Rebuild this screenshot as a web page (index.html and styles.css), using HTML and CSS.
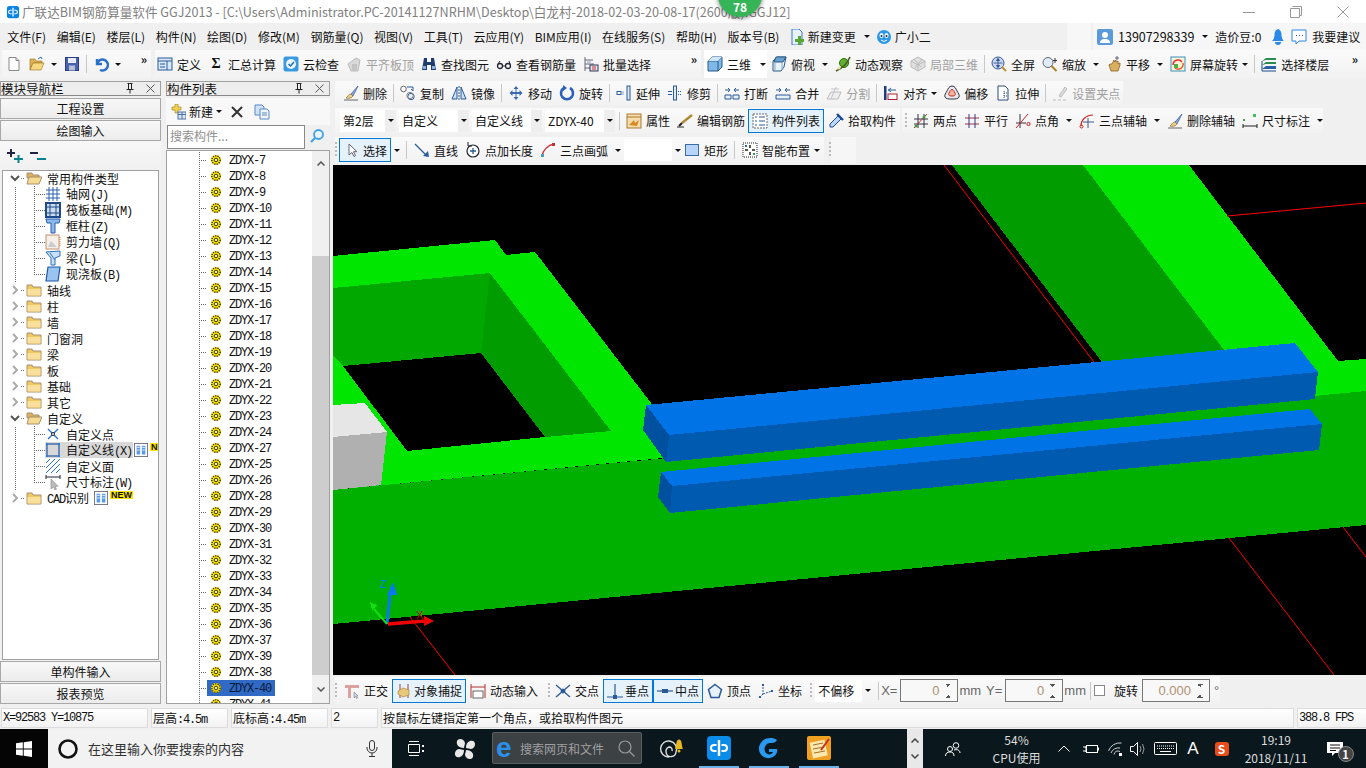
FILE: index.html
```html
<!DOCTYPE html>
<html lang="zh-CN">
<head>
    <meta charset="UTF-8">
    <title>广联达BIM钢筋算量软件 GGJ2013</title>
    <link rel="stylesheet" href="styles.css">
</head>

<body>
<svg class="defs" width="0" height="0">
    <symbol id="logo" viewBox="0 0 16 16"><rect x="1" y="1" width="14" height="14" rx="3" fill="#0a84e0"/><path d="M8 3v10" stroke="#fff" stroke-width="1.500"/><path d="M6.500 6H5a2 2 0 0 0 0 4h1.500M9.500 6H11a2 2 0 0 1 0 4H9.500" fill="none" stroke="#fff" stroke-width="1.300"/></symbol>
    <symbol id="new" viewBox="0 0 16 16"><path d="M3 1.500h7l3 3v10H3z" fill="#fff" stroke="#888"/><path d="M10 1.500v3h3" fill="#ddd" stroke="#888"/></symbol>
    <symbol id="open" viewBox="0 0 16 16"><path d="M1 3h5l1 2h6v2H4l-3 7z" fill="#e0b050" stroke="#9a7020" stroke-width=".6"/><path d="M4 7h11l-3 7H1z" fill="#f6d880" stroke="#9a7020" stroke-width=".6"/><path d="M9 3l3-2 1 2" fill="none" stroke="#3070c0"/></symbol>
    <symbol id="save" viewBox="0 0 16 16"><rect x="1.500" y="1.500" width="13" height="13" fill="#4a62b0" stroke="#283c80"/><rect x="4" y="2" width="8" height="5" fill="#e8ecf8"/><rect x="5" y="9.500" width="6" height="5" fill="#b8c0d8"/></symbol>
    <symbol id="undo" viewBox="0 0 16 16"><path d="M4 3v5h5M4 8a5.500 5.500 0 1 1 3 6" fill="none" stroke="#2a70c8" stroke-width="2.400"/></symbol>
    <symbol id="define" viewBox="0 0 16 16"><rect x="1" y="2" width="14" height="12" fill="#d8e8f8" stroke="#2a5a98"/><path d="M1 5h14M3 8h5M3 11h5M10 5v9" stroke="#2a5a98" fill="none"/></symbol>
    <symbol id="cloud" viewBox="0 0 16 16"><rect x=".5" y=".5" width="15" height="15" rx="2" fill="#3a9ae0"/><circle cx="8" cy="8" r="5" fill="#e8f4ff"/><path d="M5.500 8l2 2 3.500-4" fill="none" stroke="#2070b8" stroke-width="1.500"/></symbol>
    <symbol id="flat" viewBox="0 0 16 16"><path d="M2 8l8-6 4 2-2 11H5z" fill="#d8d8d8" stroke="#bbb"/><path d="M6 8h5v7H6z" fill="#c4c4c4"/></symbol>
    <symbol id="binoc" viewBox="0 0 16 16"><path d="M3 2h3v4h4V2h3l2 12H10V9H6v5H1z" fill="#1f3c70"/><rect x="2" y="10" width="3" height="3" fill="#8ab0e0"/><rect x="11" y="10" width="3" height="3" fill="#8ab0e0"/></symbol>
    <symbol id="glasses" viewBox="0 0 16 16"><circle cx="4" cy="10" r="2.500" fill="none" stroke="#223" stroke-width="1.300"/><circle cx="12" cy="10" r="2.500" fill="none" stroke="#223" stroke-width="1.300"/><path d="M6.500 10h3M2 8l2-3M14 8l-1-3" stroke="#223" fill="none"/></symbol>
    <symbol id="batch" viewBox="0 0 16 16"><path d="M2 1v14M2 4h8M2 8h9M2 12h5" stroke="#667" fill="none"/><rect x="4" y="5" width="4" height="2" fill="#bcd"/><rect x="7" y="9" width="8" height="6" fill="#dde8f4" stroke="#335"/><path d="M9 11h4M9 13h4" stroke="#c33"/></symbol>
    <symbol id="cube" viewBox="0 0 16 16"><path d="M1 5l4-4h10v10l-4 4H1z" fill="#7db8e8" stroke="#2a5a88"/><path d="M1 5h10v10M11 5l4-4" fill="none" stroke="#2a5a88"/><path d="M1 5l4-4h10l-4 4z" fill="#cfe6f8"/></symbol>
    <symbol id="top" viewBox="0 0 16 16"><path d="M2 5l4-4h9l-2 10-3 4H2z" fill="#e8f2fa" stroke="#2a5a88"/><path d="M5 1h10l-3 5H3z" fill="#6aa0d0" stroke="#2a5a88"/><path d="M4 7v7M11 6v8" stroke="#8ab" fill="none"/></symbol>
    <symbol id="orbit" viewBox="0 0 16 16"><circle cx="9" cy="7" r="4.500" fill="#60b030" stroke="#2a7010"/><path d="M1 15C6 13 12 8 15 1" fill="none" stroke="#4a5a20" stroke-width="1.600"/><circle cx="4" cy="12" r="1.500" fill="#e8e0a0"/></symbol>
    <symbol id="local" viewBox="0 0 16 16"><path d="M8 1l7 4v6l-7 4-7-4V5z" fill="#e0e0e0" stroke="#bbb"/><path d="M1 5l7 4 7-4M8 9v6M4 3l7 8M12 3L5 12" fill="none" stroke="#bbb"/></symbol>
    <symbol id="full" viewBox="0 0 16 16"><circle cx="7" cy="7" r="6" fill="#c8d8f0" stroke="#3a5a98"/><path d="M7 2.500v9M2.500 7h9M7 2.500l-1.500 2h3zM7 11.500l-1.500-2h3z" stroke="#2a4a88" fill="#2a4a88" stroke-width=".8"/><path d="M11 11l4 4" stroke="#c09030" stroke-width="2"/></symbol>
    <symbol id="zoom" viewBox="0 0 16 16"><circle cx="6" cy="6.500" r="5" fill="#e0ecf8" stroke="#667"/><path d="M9.500 10l5 5" stroke="#b08020" stroke-width="2"/><path d="M13 2v5M11 4.500h4" stroke="#333"/></symbol>
    <symbol id="pan" viewBox="0 0 16 16"><path d="M3 9l2 6h7l2-6V7l-2 1V5l-2 1V4L8 6V4L6 8 4 8z" fill="#d8b060" stroke="#8a6020" stroke-width=".8"/><path d="M11 0v4M9 2h4" stroke="#667" fill="none"/></symbol>
    <symbol id="spin" viewBox="0 0 16 16"><rect x="1" y="1" width="14" height="14" fill="#f8f4d8" stroke="#3a90c0"/><path d="M3 9a5 5 0 0 1 9-3" fill="none" stroke="#e03030" stroke-width="1.500"/><path d="M13 7a5 5 0 0 1-8 5" fill="none" stroke="#e06030" stroke-width="1.500"/><rect x="4" y="8" width="4" height="4" fill="#50b040"/></symbol>
    <symbol id="floors" viewBox="0 0 16 16"><path d="M1 5l4-3h10v2H5zM1 9l4-3h10v2H5z" fill="#2a8a50"/><path d="M1 13l4-3h10v3z" fill="#2a60a8"/><path d="M1 5v10h14" fill="none" stroke="#1a4a88"/></symbol>
    <symbol id="erase" viewBox="0 0 16 16"><path d="M15 1L8 9l2 2z" fill="#88a8d8" stroke="#3a5a98" stroke-width=".7"/><path d="M8 9c-3 0-3 3-5 4 2 1 6 0 7-2z" fill="#e8d088" stroke="#8a7030" stroke-width=".7"/><path d="M1 15h14" stroke="#666"/></symbol>
    <symbol id="copy" viewBox="0 0 16 16"><circle cx="3.500" cy="4" r="2.800" fill="#fff" stroke="#666"/><circle cx="11" cy="11.500" r="3.200" fill="#e8ecf4" stroke="#2a5a98"/><circle cx="10" cy="10.500" r="3.200" fill="none" stroke="#888"/><path d="M7 2h6v4M13 6l-2-2" fill="none" stroke="#2a5a98"/></symbol>
    <symbol id="mirror" viewBox="0 0 16 16"><path d="M6 2L1 14h5zM10 2l5 12h-5z" fill="#d0e0f4" stroke="#2a5a98"/><path d="M8 1v14" stroke="#2a5a98" stroke-dasharray="2 1"/></symbol>
    <symbol id="move" viewBox="0 0 16 16"><path d="M8 1l2.500 3h-2v3h3V5l3 3-3 3V9h-3v3h2L8 15l-2.500-3h2V9h-3v2l-3-3 3-3v2h3V4h-2z" fill="#3a6ab0"/></symbol>
    <symbol id="rotate" viewBox="0 0 16 16"><path d="M5 3a6 6 0 1 0 6 0" fill="none" stroke="#2a60c0" stroke-width="2.600"/><path d="M4 0v6l4-3z" fill="#2a60c0"/></symbol>
    <symbol id="extend" viewBox="0 0 16 16"><rect x="1" y="6.500" width="4" height="3" fill="#fff" stroke="#2a5a98"/><path d="M6.500 7h2M6.500 9h2" stroke="#2a5a98" stroke-dasharray="1 1"/><rect x="11" y="1" width="3" height="14" fill="#dce8f8" stroke="#2a5a98"/></symbol>
    <symbol id="trim" viewBox="0 0 16 16"><path d="M1 6.500h4M1 9.500h4" stroke="#2a5a98"/><path d="M11 6.500h3M11 9.500h3" stroke="#2a5a98" stroke-dasharray="1 1"/><rect x="6.500" y="1" width="3" height="14" fill="#dce8f8" stroke="#2a5a98"/></symbol>
    <symbol id="break" viewBox="0 0 16 16"><path d="M1 10h6v4H1zM9 10h6v4H9z" fill="#e8f0fa" stroke="#2a5a98"/><path d="M1 5h5M4 3l2 2-2 2M15 5h-5M12 3l-2 2 2 2" fill="none" stroke="#2a5a98"/></symbol>
    <symbol id="merge" viewBox="0 0 16 16"><path d="M1 10h14v4H1z" fill="#e8f0fa" stroke="#2a5a98"/><path d="M1 5h5M4 3l2 2-2 2M15 5h-5M12 3l-2 2 2 2" fill="none" stroke="#2a5a98"/></symbol>
    <symbol id="split" viewBox="0 0 16 16"><path d="M1 14l4-7h10l-3 7z" fill="#eee" stroke="#bbb"/><path d="M10 2l-5 12M5 4h8" stroke="#c4c4c4" fill="none"/></symbol>
    <symbol id="align" viewBox="0 0 16 16"><rect x="1" y="1" width="2.500" height="14" fill="#1f3c80"/><rect x="5" y="9" width="9" height="5.500" fill="#fff" stroke="#b02030"/><path d="M13 5H5M8 3L5.500 5 8 7" stroke="#2a5a98" fill="none"/></symbol>
    <symbol id="offset" viewBox="0 0 16 16"><path d="M8 1c3 0 4 3 5 5s3 4 2 6-3 2-7 2-6 0-7-2 1-4 2-6 2-5 5-5z" fill="#e8e8f0" stroke="#334"/><path d="M8 4.500c1.500 0 2 1.500 3 3.500s0 3-3 3-4-1-3-3 1.500-3.500 3-3.500z" fill="#f4b0a0" stroke="#c03020"/></symbol>
    <symbol id="stretch" viewBox="0 0 16 16"><path d="M3 1h7l3 3v11H3z" fill="#fff" stroke="#2a4a78"/><path d="M9 6v8M9 8h3M9 11h3" stroke="#2a4a78" stroke-dasharray="1 1"/></symbol>
    <symbol id="grip" viewBox="0 0 16 16"><path d="M7 11l6-9 2 2-6 8z" fill="#ddd" stroke="#bbb"/><path d="M1 15h3M6 15h3M11 15h3" stroke="#bbb"/></symbol>
    <symbol id="prop" viewBox="0 0 16 16"><rect x="1" y="1" width="14" height="14" fill="#f4dcae" stroke="#aa7a30"/><path d="M1 4h14" stroke="#aa7a30"/><path d="M3 12l5-5 1 3 4-3-2 6z" fill="#d88a20"/></symbol>
    <symbol id="rebar" viewBox="0 0 16 16"><path d="M15 2L5 10" stroke="#b08a30" stroke-width="2.400"/><path d="M5 10l-3 3" stroke="#222" stroke-width="2"/><path d="M0 14h7" stroke="#222"/></symbol>
    <symbol id="list" viewBox="0 0 16 16"><rect x="1" y="1" width="14" height="14" fill="#fff" stroke="#667" stroke-dasharray="2 1"/><path d="M3 4h2M3 8h2M3 12h2M7 4h6M7 8h6M7 12h6" stroke="#2a5a98"/></symbol>
    <symbol id="picker" viewBox="0 0 16 16"><path d="M10 3l3 3-8 8H2v-3z" fill="#bcd8f8" stroke="#1f4a98"/><path d="M9 1l6 6" stroke="#1f4a98" stroke-width="2.400"/></symbol>
    <symbol id="two" viewBox="0 0 16 16"><path d="M5 1v14M11 1v14M1 6h14M1 11h14" stroke="#334" fill="none"/><path d="M1 15L14 1" stroke="#b03030"/><circle cx="3" cy="13" r="1.500" fill="#40a040"/><circle cx="11" cy="4" r="1.500" fill="#40a040"/></symbol>
    <symbol id="parallel" viewBox="0 0 16 16"><path d="M1 5h14M1 11h14" stroke="#a03040"/><path d="M5 1v14M11 1v14" stroke="#303880"/></symbol>
    <symbol id="angle" viewBox="0 0 16 16"><path d="M5 1v14M1 10h10" stroke="#334" fill="none"/><path d="M1 15L13 1" stroke="#c02020"/><circle cx="13.500" cy="11" r="1.600" fill="none" stroke="#c02020"/></symbol>
    <symbol id="arc3" viewBox="0 0 16 16"><path d="M2 13C2 7 7 2 14 2" fill="none" stroke="#d02020" stroke-width="1.200"/><circle cx="2.500" cy="13.500" r="1.500" fill="none" stroke="#d02020"/><path d="M9 5v10M4 9h11" stroke="#2a4a88" stroke-width=".9"/></symbol>
    <symbol id="dim" viewBox="0 0 16 16"><path d="M1 11v4M15 11v4M1 13h14" stroke="#222"/><rect x="1" y="6" width="2" height="2" fill="#40a040"/><rect x="11" y="1" width="3" height="3" fill="#40c060"/></symbol>
    <symbol id="cursor" viewBox="0 0 16 16"><path d="M5 2v11l3-2.500 2 4 1.500-.8-2-4h3.500z" fill="#fff" stroke="#667"/></symbol>
    <symbol id="line" viewBox="0 0 16 16"><path d="M1 2l12 12" stroke="#2a5a98" stroke-width="1.300"/><path d="M15 15l-6-1 5-5z" fill="#2a5a98"/></symbol>
    <symbol id="ptlen" viewBox="0 0 16 16"><circle cx="8" cy="9" r="6" fill="#fff" stroke="#223" stroke-width="1.200"/><path d="M8 6v6M5 9h6" stroke="#2a5a98" stroke-width="1.300"/><path d="M3 0v4h4" fill="none" stroke="#223"/></symbol>
    <symbol id="arc" viewBox="0 0 16 16"><path d="M2 14C3 8 8 3 14 2" fill="none" stroke="#c83030" stroke-width="1.400"/><rect x="1" y="12" width="3" height="3" fill="#40a0c0"/><rect x="12" y="1" width="3" height="3" fill="#c83030"/></symbol>
    <symbol id="rect" viewBox="0 0 16 16"><rect x="1.500" y="2.500" width="13" height="11" fill="#b8d4f8" stroke="#3a6ab0"/></symbol>
    <symbol id="smart" viewBox="0 0 16 16"><rect x="1" y="1" width="14" height="14" fill="#fff" stroke="#222" stroke-dasharray="1 1"/><path d="M8 3v3M8 10v3M3 8h3M10 8h3" stroke="#222" stroke-width="1.500"/><rect x="3" y="3" width="2" height="2" fill="#3060c0"/><rect x="11" y="11" width="2" height="2" fill="#30a060"/></symbol>
    <symbol id="ortho" viewBox="0 0 16 16"><path d="M1 2h14v3H1zM4 5h3v10H4z" fill="#dca0a0"/><path d="M10 9v6l1.500-1.500 1 2 1-.5-1-2H14z" fill="#ccd8e8" stroke="#667" stroke-width=".5"/></symbol>
    <symbol id="snap" viewBox="0 0 16 16"><path d="M4 1v14M12 1v14" stroke="#a04030"/><path d="M2 8l5-3 6 2v5l-6 2-5-3z" fill="#e8c878" stroke="#a08030" stroke-width=".6"/></symbol>
    <symbol id="dyn" viewBox="0 0 16 16"><path d="M1 1v14M15 1v14" stroke="#b03030"/><path d="M1 4h14" stroke="#b03030"/><rect x="3" y="8" width="10" height="7" fill="#fff" stroke="#666"/></symbol>
    <symbol id="cross" viewBox="0 0 16 16"><path d="M1 2l14 12M15 2L1 14" stroke="#2a5a98" stroke-width="1.300"/><rect x="6" y="6" width="4" height="4" fill="#2a5a98" transform="rotate(45 8 8)"/></symbol>
    <symbol id="perp" viewBox="0 0 16 16"><path d="M8 1v13M0 14h16" stroke="#2a5a98" stroke-width="1.200"/><rect x="6" y="12" width="4" height="4" fill="#2a5a98"/></symbol>
    <symbol id="mid" viewBox="0 0 16 16"><path d="M0 8h16" stroke="#2a5a98" stroke-width="1.200"/><rect x="5" y="6" width="6" height="4" fill="#2a5a98"/></symbol>
    <symbol id="vertex" viewBox="0 0 16 16"><path d="M8 1.500l6.500 5-2.500 8H4l-2.500-8z" fill="#e8f2fc" stroke="#2a5a98" stroke-width="1.500"/></symbol>
    <symbol id="coord" viewBox="0 0 16 16"><path d="M5 1v10M5 11l9-3M5 11l-4 4" stroke="#2a5a98" stroke-dasharray="2 1"/><rect x="4" y="1" width="2" height="2" fill="#2a5a98"/><rect x="13" y="7" width="2" height="2" fill="#2a5a98"/><rect x="1" y="13" width="2" height="2" fill="#2a5a98"/></symbol>
    <symbol id="chev-r" viewBox="0 0 12 12"><path d="M4 2l4 4-4 4" fill="none" stroke="#aaa" stroke-width="2"/></symbol>
    <symbol id="chev-d" viewBox="0 0 12 12"><path d="M2 4l4 4 4-4" fill="none" stroke="#555" stroke-width="2"/></symbol>
    <symbol id="folder" viewBox="0 0 16 16"><path d="M1 3h5l1 2h8v9H1z" fill="#f0c860" stroke="#a89070"/><path d="M1.500 7h13v6.500h-13z" fill="#f8e09a"/></symbol>
    <symbol id="folder-o" viewBox="0 0 16 16"><path d="M1 3h5l1 2h6v3H1z" fill="#d8b060" stroke="#a89070"/><path d="M3 7h13l-3 7H1z" fill="#f6dc90" stroke="#a89070"/></symbol>
    <symbol id="t-grid" viewBox="0 0 16 16"><path d="M4 1v14M8 1v14M12 1v14M1 4h14M1 8h14M1 12h14" stroke="#2a60b0"/></symbol>
    <symbol id="t-raft" viewBox="0 0 16 16"><rect x="1" y="1" width="14" height="14" fill="#cde" stroke="#1f4a88" stroke-width="2"/><path d="M5 1v14M11 1v14M1 5h14M1 11h14" stroke="#1f4a88"/></symbol>
    <symbol id="t-col" viewBox="0 0 16 16"><path d="M1 1h14l-1 4h-4v10H6V5H2z" fill="#8ab8e8" stroke="#2a60b0"/></symbol>
    <symbol id="t-wall" viewBox="0 0 16 16"><rect x="1" y="1" width="13" height="14" fill="#f4efe8" stroke="#c89070"/><path d="M3 13l3-6 2 2 4 4z" fill="#ccc"/><path d="M15 3v10" stroke="#d08030" stroke-dasharray="1 1"/></symbol>
    <symbol id="t-beam" viewBox="0 0 16 16"><path d="M1 2l14-1v5l-5 2v7H6V8z" fill="#c8e0f8" stroke="#2a70b8"/><path d="M5 3l5 7" stroke="#2a70b8"/></symbol>
    <symbol id="t-slab" viewBox="0 0 16 16"><path d="M3 1h12l-2 14H1z" fill="#9ac4f0" stroke="#1f58a8" stroke-width="1.200"/></symbol>
    <symbol id="t-cpt" viewBox="0 0 16 16"><path d="M3 3l10 10M13 3L3 13" stroke="#2a70c8" stroke-width="1.400"/><circle cx="8" cy="8" r="1.500" fill="#fff" stroke="#223"/></symbol>
    <symbol id="t-cline" viewBox="0 0 16 16"><rect x="2" y="2" width="12" height="12" fill="none" stroke="#1f58a8" stroke-width="1.200"/><path d="M1 1h2v2H1zM13 1h2v2h-2zM1 13h2v2H1zM13 13h2v2h-2z" fill="#2a80e0"/></symbol>
    <symbol id="t-cface" viewBox="0 0 16 16"><path d="M1 5l4-4M1 10l9-9M1 15L15 1M6 15l9-9M11 15l4-4" stroke="#2a70c8"/></symbol>
    <symbol id="t-cdim" viewBox="0 0 16 16"><path d="M1 1v4M15 1v4M1 3h14" stroke="#223"/><path d="M6 5v10l2.500-2 1.500 3 1.500-.7-1.500-3H13z" fill="#bbb" stroke="#888" stroke-width=".6"/></symbol>
    <symbol id="book" viewBox="0 0 16 16"><rect x=".5" y=".5" width="15" height="15" fill="#fff" stroke="#667"/><path d="M3 3h4v10H3zM9 3h4v10H9z" fill="#5a98e8"/><path d="M3.500 5h3M3.500 8h3M9.500 5h3M9.500 8h3" stroke="#fff"/></symbol>
    <symbol id="gear" viewBox="0 0 12 12"><circle cx="6" cy="6" r="5" fill="#ffe800"/><circle cx="6" cy="6" r="4.200" fill="none" stroke="#222" stroke-width="1.300" stroke-dasharray="1.300 1"/><circle cx="6" cy="6" r="1.800" fill="#fff27a" stroke="#222" stroke-width=".9"/></symbol>
    <symbol id="search" viewBox="0 0 16 16"><circle cx="9.500" cy="6.500" r="4.500" fill="#e8f4ff" stroke="#40a0e8" stroke-width="1.800"/><path d="M6 10l-4 4" stroke="#40a0e8" stroke-width="2.200"/></symbol>
    <symbol id="plus" viewBox="0 0 18 16"><path d="M1 5h8M5 1v8" stroke="#224" stroke-width="2"/><path d="M8 11h9M12.500 7v8" stroke="#0a8090" stroke-width="2"/></symbol>
    <symbol id="minus" viewBox="0 0 18 16"><path d="M1 5h8" stroke="#224" stroke-width="2"/><path d="M8 11h9" stroke="#0a8090" stroke-width="2"/></symbol>
    <symbol id="add-new" viewBox="0 0 16 16"><path d="M5 0h3v3h3v3H8v3H5V6H2V3h3z" fill="#f0d050" stroke="#a08020" stroke-width=".6"/><rect x="8" y="8" width="8" height="7" fill="#dde8f8" stroke="#4a70a8"/><path d="M8 10.500h8M12 8v7" stroke="#4a70a8"/></symbol>
    <symbol id="doc-copy" viewBox="0 0 16 16"><path d="M1 1h7l2 2v8H1z" fill="#cfe2f8" stroke="#5a88c0"/><path d="M6 5h7l2 2v8H6z" fill="#eef5fd" stroke="#5a88c0"/><path d="M8 9h5M8 11h5" stroke="#5a88c0"/></symbol>
    <symbol id="user" viewBox="0 0 16 16"><rect width="16" height="16" rx="2" fill="#5a9ad8"/><circle cx="8" cy="6" r="3" fill="#fff"/><path d="M3 14c0-3 2-4 5-4s5 1 5 4z" fill="#fff"/></symbol>
    <symbol id="bell" viewBox="0 0 16 16"><path d="M8 0c3 1 3.500 4 3.500 6s1 5 2.500 6H2c1.500-1 2.500-4 2.500-6S5 1 8 0z" fill="#2a88e8"/><path d="M5 13h6a3 3 0 0 1-6 0z" fill="#2a88e8"/></symbol>
    <symbol id="advice" viewBox="0 0 16 16"><path d="M1 1h14v11H8l-3 3v-3H1z" fill="#fff" stroke="#2a88e8"/><path d="M5 6.500h1M8 6.500h1M11 6.500h1" stroke="#2a5a98"/></symbol>
    <symbol id="change" viewBox="0 0 16 16"><path d="M3 0h7l3 3v13H3z" fill="#e8f2fc" stroke="#3a78c0"/><path d="M9 7v3H6v3h3v3h3v-3h3v-3h-3V7z" fill="#58a830"/></symbol>
    <symbol id="xiaoer" viewBox="0 0 16 16"><circle cx="8" cy="8" r="7" fill="#2a98e8"/><ellipse cx="5.500" cy="6.500" rx="2" ry="2.500" fill="#fff"/><ellipse cx="10.500" cy="6.500" rx="2" ry="2.500" fill="#fff"/><circle cx="5.500" cy="7" r="1" fill="#123"/><circle cx="10.500" cy="7" r="1" fill="#123"/><path d="M5 11q3 3 6 0" fill="none" stroke="#fff"/></symbol>
</svg>

<div class="app">
    <div class="badge">78</div>

    <header class="titlebar">
        <svg class="title-logo"><use href="#logo"/></svg>
        <span class="title-text">广联达BIM钢筋算量软件 GGJ2013 - [C:\Users\Administrator.PC-20141127NRHM\Desktop\白龙村-2018-02-03-20-08-17(2600版).GGJ12]</span>
        <div class="win-controls">
            <span class="win-btn"><svg width="12" height="12"><path d="M0 6.500h12" stroke="#999"/></svg></span>
            <span class="win-btn"><svg width="12" height="12"><path d="M2.500 .5h9v9h-2M.5 2.500h9v9h-9z" fill="none" stroke="#999"/></svg></span>
            <span class="win-btn"><svg width="12" height="12"><path d="M.5 .5l11 11M11.500 .5l-11 11" stroke="#999"/></svg></span>
        </div>
    </header>

    <nav class="menubar">
        <span class="menu">文件(F)</span><span class="menu">编辑(E)</span><span class="menu">楼层(L)</span><span class="menu">构件(N)</span><span class="menu">绘图(D)</span><span class="menu">修改(M)</span><span class="menu">钢筋量(Q)</span><span class="menu">视图(V)</span><span class="menu">工具(T)</span><span class="menu">云应用(Y)</span><span class="menu">BIM应用(I)</span><span class="menu">在线服务(S)</span><span class="menu">帮助(H)</span><span class="menu">版本号(B)</span>
        <span class="tool menu-tool"><svg class="ico"><use href="#change"/></svg>新建变更<i class="caret"></i></span>
        <span class="tool menu-tool"><svg class="ico"><use href="#xiaoer"/></svg>广小二</span>
        <div class="account-gap"></div>
        <div class="account">
            <svg class="ico"><use href="#user"/></svg><span class="phone">13907298339</span><i class="caret"></i>
            <span class="beans">造价豆:0</span>
            <svg class="ico"><use href="#bell"/></svg>
            <svg class="ico"><use href="#advice"/></svg><span>我要建议</span>
        </div>
    </nav>

    <div class="toolbar toolbar-main">
        <div class="band band-file">
            <span class="tool"><svg class="ico"><use href="#new"/></svg></span>
            <span class="tool"><svg class="ico"><use href="#open"/></svg><i class="caret"></i></span>
            <span class="tool"><svg class="ico"><use href="#save"/></svg></span>
            <i class="sep"></i>
            <span class="tool"><svg class="ico"><use href="#undo"/></svg><i class="caret"></i></span>
            <span class="more">»</span>
        </div>
        <div class="band band-calc">
            <span class="tool"><svg class="ico"><use href="#define"/></svg>定义</span>
            <span class="tool"><b class="sigma">Σ</b>汇总计算</span>
            <span class="tool"><svg class="ico"><use href="#cloud"/></svg>云检查</span>
            <span class="tool off"><svg class="ico"><use href="#flat"/></svg>平齐板顶</span>
            <span class="tool"><svg class="ico"><use href="#binoc"/></svg>查找图元</span>
            <span class="tool"><svg class="ico"><use href="#glasses"/></svg>查看钢筋量</span>
            <span class="tool"><svg class="ico"><use href="#batch"/></svg>批量选择</span>
            <span class="more">»</span>
        </div>
        <div class="band band-view">
            <span class="tool tool-white"><svg class="ico"><use href="#cube"/></svg>三维<i class="caret"></i></span>
            <span class="tool"><svg class="ico"><use href="#top"/></svg>俯视<i class="caret"></i></span>
            <span class="tool"><svg class="ico"><use href="#orbit"/></svg>动态观察</span>
            <span class="tool off"><svg class="ico"><use href="#local"/></svg>局部三维</span>
            <i class="sep"></i>
            <span class="tool"><svg class="ico"><use href="#full"/></svg>全屏</span>
            <span class="tool"><svg class="ico"><use href="#zoom"/></svg>缩放<i class="caret"></i></span>
            <span class="tool"><svg class="ico"><use href="#pan"/></svg>平移<i class="caret"></i></span>
            <span class="tool"><svg class="ico"><use href="#spin"/></svg>屏幕旋转<i class="caret caret-near"></i></span>
            <i class="sep"></i>
            <span class="tool"><svg class="ico"><use href="#floors"/></svg>选择楼层</span>
            <span class="more">»</span>
        </div>
    </div>

    <div class="workspace">
        <aside class="panel nav-panel">
            <div class="panel-head"><span>模块导航栏</span><span class="panel-pins"><svg width="8" height="11"><path d="M1.500 .5h5M2.500 .5v6M5.500 .5v6M.5 6.500h7M4 6.500v4" fill="none" stroke="#222"/></svg><svg width="9" height="9"><path d="M.5 .5l8 8M8.500 .5l-8 8" stroke="#555"/></svg></span></div>
            <div class="nav-btn">工程设置</div>
            <div class="nav-btn">绘图输入</div>
            <div class="tree-tools">
                <svg width="18" height="16"><use href="#plus"/></svg>
                <svg width="18" height="16"><use href="#minus"/></svg>
            </div>
            <div class="tree">
                <div class="tree-row"><svg class="chev"><use href="#chev-d"/></svg><i class="stub"></i><svg class="ico"><use href="#folder-o"/></svg><span>常用构件类型</span></div>
                <div class="kids">
                    <div class="tree-row child"><i class="guide"></i><svg class="ico"><use href="#t-grid"/></svg><span>轴网<span class="asc">(J)</span></span></div>
                    <div class="tree-row child"><i class="guide"></i><svg class="ico"><use href="#t-raft"/></svg><span>筏板基础<span class="asc">(M)</span></span></div>
                    <div class="tree-row child"><i class="guide"></i><svg class="ico"><use href="#t-col"/></svg><span>框柱<span class="asc">(Z)</span></span></div>
                    <div class="tree-row child"><i class="guide"></i><svg class="ico"><use href="#t-wall"/></svg><span>剪力墙<span class="asc">(Q)</span></span></div>
                    <div class="tree-row child"><i class="guide"></i><svg class="ico"><use href="#t-beam"/></svg><span>梁<span class="asc">(L)</span></span></div>
                    <div class="tree-row child"><i class="guide guide-end"></i><svg class="ico"><use href="#t-slab"/></svg><span>现浇板<span class="asc">(B)</span></span></div>
                </div>
                <div class="tree-row"><svg class="chev"><use href="#chev-r"/></svg><i class="stub"></i><svg class="ico"><use href="#folder"/></svg><span>轴线</span></div>
                <div class="tree-row"><svg class="chev"><use href="#chev-r"/></svg><i class="stub"></i><svg class="ico"><use href="#folder"/></svg><span>柱</span></div>
                <div class="tree-row"><svg class="chev"><use href="#chev-r"/></svg><i class="stub"></i><svg class="ico"><use href="#folder"/></svg><span>墙</span></div>
                <div class="tree-row"><svg class="chev"><use href="#chev-r"/></svg><i class="stub"></i><svg class="ico"><use href="#folder"/></svg><span>门窗洞</span></div>
                <div class="tree-row"><svg class="chev"><use href="#chev-r"/></svg><i class="stub"></i><svg class="ico"><use href="#folder"/></svg><span>梁</span></div>
                <div class="tree-row"><svg class="chev"><use href="#chev-r"/></svg><i class="stub"></i><svg class="ico"><use href="#folder"/></svg><span>板</span></div>
                <div class="tree-row"><svg class="chev"><use href="#chev-r"/></svg><i class="stub"></i><svg class="ico"><use href="#folder"/></svg><span>基础</span></div>
                <div class="tree-row"><svg class="chev"><use href="#chev-r"/></svg><i class="stub"></i><svg class="ico"><use href="#folder"/></svg><span>其它</span></div>
                <div class="tree-row"><svg class="chev"><use href="#chev-d"/></svg><i class="stub"></i><svg class="ico"><use href="#folder-o"/></svg><span>自定义</span></div>
                <div class="kids">
                    <div class="tree-row child"><i class="guide"></i><svg class="ico"><use href="#t-cpt"/></svg><span>自定义点</span></div>
                    <div class="tree-row child is-current"><i class="guide"></i><span class="tree-sel"><svg class="ico"><use href="#t-cline"/></svg><span>自定义线<span class="asc">(X)</span></span></span><svg class="book"><use href="#book"/></svg><span class="new">NEW</span></div>
                    <div class="tree-row child"><i class="guide"></i><svg class="ico"><use href="#t-cface"/></svg><span>自定义面</span></div>
                    <div class="tree-row child"><i class="guide guide-end"></i><svg class="ico"><use href="#t-cdim"/></svg><span>尺寸标注<span class="asc">(W)</span></span></div>
                </div>
                <div class="tree-row"><svg class="chev"><use href="#chev-r"/></svg><i class="stub"></i><svg class="ico"><use href="#folder"/></svg><span><span class="asc">CAD</span>识别</span><svg class="book book-cad"><use href="#book"/></svg><span class="new">NEW</span></div>
            </div>
            <div class="nav-btn nav-btn-low">单构件输入</div>
            <div class="nav-btn">报表预览</div>
        </aside>

        <aside class="panel list-panel">
            <div class="panel-head"><span>构件列表</span><span class="panel-pins"><svg width="8" height="11"><path d="M1.500 .5h5M2.500 .5v6M5.500 .5v6M.5 6.500h7M4 6.500v4" fill="none" stroke="#222"/></svg><svg width="9" height="9"><path d="M.5 .5l8 8M8.500 .5l-8 8" stroke="#555"/></svg></span></div>
            <div class="list-tools">
                <svg class="ico"><use href="#add-new"/></svg><span>新建</span><i class="caret caret-near"></i>
                <svg class="list-x" width="12" height="12"><path d="M1 1l10 10M11 1L1 11" stroke="#333" stroke-width="2"/></svg>
                <svg class="ico"><use href="#doc-copy"/></svg>
            </div>
            <div class="search-row">
                <div class="search-input">搜索构件...</div>
                <svg class="ico search-ico"><use href="#search"/></svg>
            </div>
            <div class="list-box">
                <div class="list-rows" id="list-rows"></div>
                <div class="scrollbar">
                    <div class="scroll-btn"><svg width="8" height="5"><path d="M.5 4.500L4 1l3.500 3.500" fill="none" stroke="#555" stroke-width="1.500"/></svg></div>
                    <div class="scroll-thumb"></div>
                    <div class="scroll-btn scroll-btn-down"><svg width="8" height="5"><path d="M.5 .5L4 4l3.500-3.500" fill="none" stroke="#555" stroke-width="1.500"/></svg></div>
                </div>
            </div>
        </aside>

        <main class="canvas-col">
            <div class="row row-a">
                <div class="band band-edit">
                    <span class="tool"><svg class="ico"><use href="#erase"/></svg>删除</span><i class="sep"></i>
                    <span class="tool"><svg class="ico"><use href="#copy"/></svg>复制</span>
                    <span class="tool"><svg class="ico"><use href="#mirror"/></svg>镜像</span><i class="sep"></i>
                    <span class="tool"><svg class="ico"><use href="#move"/></svg>移动</span>
                    <span class="tool"><svg class="ico"><use href="#rotate"/></svg>旋转</span><i class="sep"></i>
                    <span class="tool"><svg class="ico"><use href="#extend"/></svg>延伸</span>
                    <span class="tool"><svg class="ico"><use href="#trim"/></svg>修剪</span><i class="sep"></i>
                    <span class="tool"><svg class="ico"><use href="#break"/></svg>打断</span>
                    <span class="tool"><svg class="ico"><use href="#merge"/></svg>合并</span>
                    <span class="tool off"><svg class="ico"><use href="#split"/></svg>分割</span><i class="sep"></i>
                    <span class="tool"><svg class="ico"><use href="#align"/></svg>对齐<i class="caret caret-near"></i></span>
                    <span class="tool"><svg class="ico"><use href="#offset"/></svg>偏移</span>
                    <span class="tool"><svg class="ico"><use href="#stretch"/></svg>拉伸</span><i class="sep"></i>
                    <span class="tool off"><svg class="ico"><use href="#grip"/></svg>设置夹点</span>
                </div>
            </div>
            <div class="row row-b">
                <div class="band band-combo">
                    <span class="combo combo-floor">第2层</span><span class="combo-btn"><i class="caret"></i></span>
                    <span class="combo combo-type">自定义</span><span class="combo-btn"><i class="caret"></i></span>
                    <span class="combo combo-type">自定义线</span><span class="combo-btn"><i class="caret"></i></span>
                    <span class="combo combo-type">ZDYX-40</span><span class="combo-btn"><i class="caret"></i></span>
                    <i class="sep"></i>
                    <span class="tool"><svg class="ico"><use href="#prop"/></svg>属性</span>
                    <span class="tool tool-tight"><svg class="ico"><use href="#rebar"/></svg>编辑钢筋</span>
                    <span class="tool tool-on"><svg class="ico"><use href="#list"/></svg>构件列表</span>
                    <span class="tool"><svg class="ico"><use href="#picker"/></svg>拾取构件</span>
                </div>
                <div class="band band-axis">
                    <i class="gripper"></i>
                    <span class="tool"><svg class="ico"><use href="#two"/></svg>两点</span>
                    <span class="tool"><svg class="ico"><use href="#parallel"/></svg>平行</span>
                    <span class="tool"><svg class="ico"><use href="#angle"/></svg>点角<i class="caret"></i></span>
                    <span class="tool"><svg class="ico"><use href="#arc3"/></svg>三点辅轴<i class="caret"></i></span>
                    <span class="tool"><svg class="ico"><use href="#erase"/></svg>删除辅轴</span>
                    <span class="tool"><svg class="ico"><use href="#dim"/></svg>尺寸标注<i class="caret"></i></span>
                </div>
            </div>
            <div class="row row-c">
                <div class="band band-draw">
                    <i class="gripper"></i>
                    <span class="tool tool-on tool-select"><svg class="ico"><use href="#cursor"/></svg>选择</span><i class="caret caret-solo"></i>
                    <i class="sep"></i>
                    <span class="tool"><svg class="ico"><use href="#line"/></svg>直线</span>
                    <span class="tool"><svg class="ico"><use href="#ptlen"/></svg>点加长度</span>
                    <span class="tool"><svg class="ico"><use href="#arc"/></svg>三点画弧<i class="caret"></i></span>
                    <span class="combo combo-blank"></span><i class="caret caret-solo"></i>
                    <span class="tool tool-rect"><svg class="ico"><use href="#rect"/></svg>矩形</span>
                    <i class="sep"></i>
                    <span class="tool"><svg class="ico"><use href="#smart"/></svg>智能布置<i class="caret caret-near"></i></span>
                </div>
                <i class="gripper gripper-c"></i>
                <span class="blank-band"></span>
            </div>

            <svg class="viewport" viewBox="0 0 1033 510">
                <polygon class="g-light" points="0,91 162,75 173,90 202,87 318,238 330,293 0,325"/>
                <polygon class="g-mid" points="0,123 157,108 148,188 10,201 0,190"/>
                <polygon class="g-dark" points="157,108 278,266 212,272 148,188"/>
                <polygon class="black" points="10,201 148,188 212,272 74,286"/>
                <polygon class="white-top" points="0,240 32,238 54,267 0,272"/>
                <polygon class="white-front" points="0,272 54,267 48,320 0,325"/>
                <polygon class="g-dark" points="619,0 750,0 891,185 769,197"/>
                <polygon class="g-light" points="750,0 856,0 1005,196 1033,194 1033,226 960,233 891,185"/>
                <polygon class="g-front" points="0,325 1033,226 1033,360 0,459"/>
                <polygon class="b-top" points="313,240 962,178 985,207 336,270"/>
                <polygon class="b-front" points="336,270 985,207 982,234 333,297"/>
                <polygon class="b-side" points="313,240 336,270 333,297 310,265"/>
                <polygon class="b-top" points="328,307 977,244 989,259 339,321"/>
                <polygon class="b-front" points="339,321 989,259 986,285 337,348"/>
                <polygon class="b-side" points="328,307 339,321 337,348 325,332"/>
                <g class="red-lines">
                    <line x1="611" y1="0" x2="761" y2="197"/>
                    <line x1="894" y1="51" x2="1033" y2="38"/>
                    <line x1="896" y1="373" x2="1001" y2="510"/>
                    <line x1="1010" y1="362" x2="1033" y2="392"/>
                    <line x1="77" y1="452" x2="122" y2="510"/>
                </g>
                <g class="axes">
                    <path d="M54 459L57 430" stroke="#0a78f0" stroke-width="3"/>
                    <polygon points="60,417 64,430 54,430" fill="#0a78f0"/>
                    <path d="M54 459L41 444" stroke="#10e010" stroke-width="2"/>
                    <polygon points="37,437 44,440 39,445" fill="#10e010"/>
                    <path d="M55 459L92 456" stroke="#f00000" stroke-width="3.500"/>
                    <polygon points="101,456 91,451 91,461" fill="#f00000"/>
                    <text x="47" y="423" class="axis-z">Z</text>
                    <text x="47" y="445" class="axis-y">Y</text>
                    <text x="83" y="454" class="axis-x">X</text>
                </g>
            </svg>

            <div class="row row-snap">
                <div class="band band-snap">
                    <i class="gripper"></i>
                    <span class="tool"><svg class="ico"><use href="#ortho"/></svg>正交</span>
                    <span class="tool tool-on"><svg class="ico"><use href="#snap"/></svg>对象捕捉</span>
                    <span class="tool"><svg class="ico"><use href="#dyn"/></svg>动态输入</span>
                    <i class="gripper"></i>
                    <span class="tool"><svg class="ico"><use href="#cross"/></svg>交点</span>
                    <span class="tool tool-on tool-joined"><svg class="ico"><use href="#perp"/></svg>垂点</span>
                    <span class="tool tool-on tool-joined"><svg class="ico"><use href="#mid"/></svg>中点</span>
                    <span class="tool tool-vertex"><svg class="ico"><use href="#vertex"/></svg>顶点</span>
                    <span class="tool"><svg class="ico"><use href="#coord"/></svg>坐标</span>
                    <i class="gripper gripper-end"></i>
                    <span class="combo combo-offset">不偏移</span><i class="caret caret-solo"></i>
                    <i class="sep sep-wide"></i>
                    <span class="unit">X=</span>
                    <span class="spin spin-xy">0<i class="spin-arrows"></i></span>
                    <span class="unit">mm</span>
                    <span class="unit unit-y">Y=</span>
                    <span class="spin spin-xy">0<i class="spin-arrows"></i></span>
                    <span class="unit">mm</span>
                    <i class="sep sep-rot"></i>
                    <i class="checkbox"></i>
                    <span class="rot-label">旋转</span>
                    <span class="spin spin-rot">0.000<i class="spin-arrows"></i></span>
                    <span class="unit unit-deg">°</span>
                </div>
            </div>
        </main>
    </div>

    <footer class="statusbar">
        <span class="cell cell-pos asc">X=92583 Y=10875</span>
        <span class="cell cell-h">层高<span class="asc">:4.5m</span></span>
        <span class="cell cell-base">底标高<span class="asc">:4.45m</span></span>
        <span class="cell cell-n asc">2</span>
        <span class="cell cell-msg">按鼠标左键指定第一个角点，或拾取构件图元</span>
        <span class="cell cell-fps asc">388.8 FPS</span>
    </footer>

    <div class="taskbar">
        <div class="task-start"><svg width="16" height="16"><path d="M0 2.300l6.800-1v6.200H0zM7.700 1.200L16 0v7.500H7.700zM0 8.500h6.800v6.200l-6.800-1zM7.700 8.500H16V16l-8.300-1.200z" fill="#fff"/></svg></div>
        <div class="task-search">
            <svg width="20" height="20"><circle cx="10" cy="10" r="8.500" fill="none" stroke="#111" stroke-width="2.600"/></svg>
            <span>在这里输入你要搜索的内容</span>
            <svg class="task-mic" width="12" height="17"><rect x="3.500" y=".5" width="5" height="10" rx="2.500" fill="none" stroke="#333"/><path d="M1 7v1a5 5 0 0 0 10 0V7M6 13v3M3 16.500h6" fill="none" stroke="#333"/></svg>
        </div>
        <div class="task-cell task-view"><svg width="16" height="15"><path d="M1 .5h10M1 14.500h10M.5 3.500h11v8H.5z" fill="none" stroke="#fff"/><rect x="14" y="4" width="2" height="2" fill="#fff"/><rect x="14" y="9" width="2" height="2" fill="#fff"/></svg></div>
        <div class="task-cell task-fan"><svg width="22" height="22" viewBox="0 0 22 22"><path d="M10 10C4 10 2 6 3 3s7-3 8 2c0 2-1 3-1 5zM12 10c0-6 4-8 7-7s3 7-2 8c-2 0-3-1-5-1zM12 12c6 0 8 4 7 7s-7 3-8-2c0-2 1-3 1-5zM10 12c0 6-4 8-7 7s-3-7 2-8c2 0 3 1 5 1z" fill="#e8e8e8"/></svg></div>
        <div class="task-ie">
            <span class="ie-e">e</span>
            <span class="ie-text">搜索网页和文件</span>
            <svg width="17" height="17"><circle cx="7" cy="7" r="6" fill="none" stroke="#999" stroke-width="1.200"/><path d="M11.500 11.500l5 5" stroke="#999" stroke-width="1.200"/></svg>
        </div>
        <div class="task-cell task-spiral"><svg width="28" height="24" viewBox="0 0 28 24"><path d="M12 20a8 8 0 1 1 7-5 5 5 0 1 1-7-5 3 3 0 0 1 3 4" fill="none" stroke="#ddd" stroke-width="1.400"/><path d="M18 12c1-1 1-6 2-8 1-2 3-2 4 0 1 2 1 7 2 8z" fill="#e8b820"/><circle cx="22" cy="14" r="1.500" fill="#e8b820"/></svg></div>
        <div class="task-app"><svg width="24" height="24" viewBox="0 0 24 24"><rect width="24" height="24" rx="4" fill="#0a8ce8"/><path d="M12 4v16" stroke="#fff" stroke-width="2.400"/><path d="M9.500 9H7a3 3 0 0 0 0 6h2.500M14.500 9H17a3 3 0 0 1 0 6h-2.500" fill="none" stroke="#fff" stroke-width="2"/></svg></div>
        <div class="task-app"><svg width="24" height="24" viewBox="0 0 24 24"><path d="M20 4C14 0 4 2 2 11c-1 8 6 12 11 11 5-1 8-5 7-9h-8v3h4c-1 3-5 3-7 1-3-3-1-10 4-10 3 0 5 0 7-3z" fill="#2a9af0"/></svg></div>
        <div class="task-app"><svg width="24" height="24" viewBox="0 0 24 24"><rect width="24" height="24" rx="2" fill="#f0a020"/><rect x="4" y="5" width="15" height="16" fill="#fbe8b0" transform="rotate(-12 12 12)"/><path d="M6 9l10-2M6 13l11-2M7 17l11-2" stroke="#a87020"/><path d="M14 14L22 3" stroke="#c83020" stroke-width="2"/></svg></div>
        <div class="task-scroll"><svg width="8" height="5"><path d="M.5 4.500L4 1l3.500 3.500" fill="none" stroke="#444" stroke-width="1.500"/></svg><svg width="8" height="5"><path d="M.5 .5L4 4l3.500-3.500" fill="none" stroke="#444" stroke-width="1.500"/></svg></div>
        <div class="tray tray-people"><svg width="16" height="16"><circle cx="11" cy="4.500" r="2.800" fill="none" stroke="#fff"/><circle cx="5" cy="8" r="2.500" fill="none" stroke="#fff"/><path d="M.5 15c0-3 2-4 4.500-4s4 1 4 4M9 9c3-1 6 0 6 3" fill="none" stroke="#fff"/></svg></div>
        <div class="tray tray-two tray-cpu"><span>54%</span><span>CPU使用</span></div>
        <div class="tray tray-up"><svg width="12" height="7"><path d="M.5 6.500L6 1l5.500 5.500" fill="none" stroke="#fff"/></svg></div>
        <div class="tray tray-bat"><svg width="16" height="10"><rect x="3.500" y="1.500" width="11" height="7" fill="none" stroke="#fff"/><path d="M15 3.500h1v3h-1" fill="#fff"/><path d="M0 3h3M0 7h3M3 2v6" stroke="#fff"/></svg></div>
        <div class="tray tray-wifi"><svg width="14" height="14"><path d="M.5 9a12 12 0 0 1 13-8M3 11a8 8 0 0 1 9-5M6 12.500a4 4 0 0 1 6-3" fill="none" stroke="#ccc"/><rect x="11" y="11" width="3" height="3" fill="#fff"/></svg></div>
        <div class="tray tray-vol"><svg width="16" height="14"><path d="M.5 4.500h3l4-4v13l-4-4h-3z" fill="none" stroke="#fff"/><path d="M10 4q2 3 0 6M12.500 2q3 5 0 10" fill="none" stroke="#999"/></svg></div>
        <div class="tray tray-kb"><svg width="23" height="13"><rect x=".5" y=".5" width="22" height="12" rx="1" fill="none" stroke="#fff"/><path d="M3 4h17M3 6.500h17" stroke="#fff" stroke-dasharray="1 1"/><path d="M6 9.500h11" stroke="#fff"/></svg></div>
        <div class="tray tray-a">A</div>
        <div class="tray tray-s"><span>S</span></div>
        <div class="tray tray-two tray-clock"><span>19:19</span><span>2018/11/11</span></div>
        <div class="tray tray-note">
            <svg width="16" height="14"><path d="M0 0h16v11H8l-3 3v-3H0z" fill="#fff"/><path d="M3 3h10M3 6h10M3 8.500h6" stroke="#111"/></svg>
            <span class="note-count">1</span>
        </div>
    </div>
</div>

<script>
    // 构件列表的编号不是连续的，照原样排
    const ids = [7, 8, 9, 10, 11, 12, 13, 14, 15, 16, 17, 18, 19, 20, 21, 22, 23, 24, 27, 25, 26, 28, 29, 30, 31, 32, 33, 34, 35, 36, 37, 39, 38, 40, 41];
    const rows = document.getElementById('list-rows');
    rows.innerHTML = ids.map(id => `
        <div class="list-row${id === 40 ? ' is-selected' : ''}">
            <i class="guide"></i><span class="list-item"><svg class="gear"><use href="#gear"/></svg><span class="asc">ZDYX-${id}</span></span>
        </div>`).join('');
</script>
</body>
</html>
```

FILE: styles.css
```css
* {
    margin: 0;
    padding: 0;
    box-sizing: border-box;
}

body {
    font-family: "Noto Sans CJK SC", "Liberation Sans", sans-serif;
    font-size: 12px;
    color: #111;
    background: #f0f0f0;
    overflow: hidden;
}

.defs {
    position: absolute;
}

.app {
    position: relative;
    width: 1366px;
    height: 768px;
    overflow: hidden;
    display: flex;
    flex-direction: column;
}

.badge {
    position: absolute;
    left: 718px;
    top: -27px;
    width: 44px;
    height: 44px;
    border-radius: 50%;
    background: #35b558;
    box-shadow: 0 1px 5px rgba(0, 0, 0, 0.55);
    color: #fff;
    font-weight: bold;
    line-height: 14px;
    display: flex;
    align-items: flex-end;
    justify-content: center;
    padding-bottom: 3px;
}

.titlebar {
    height: 23px;
    background: #fff;
    display: flex;
    align-items: center;
    padding-left: 6px;
    flex-shrink: 0;
}

.title-logo {
    width: 14px;
    height: 14px;
    margin-right: 2px;
}

.title-text {
    color: #808080;
    font-size: 12.6px;
    white-space: nowrap;
}

.win-controls {
    margin-left: auto;
    display: flex;
}

.win-btn {
    width: 47px;
    display: flex;
    justify-content: center;
    align-items: center;
}

.menubar {
    height: 27px;
    display: flex;
    align-items: center;
    padding-left: 2px;
    flex-shrink: 0;
}

.menu {
    padding: 0 5.3px;
    white-space: nowrap;
}

.tool.menu-tool {
    margin-left: 4px;
    margin-right: 2px;
    gap: 3px;
}

.menu-tool .caret {
    margin-left: 5px;
}

.account-gap {
    width: 24px;
    height: 27px;
    margin-left: auto;
    background: #f7f7f7;
}

.account {
    margin-left: 2px;
    width: 273px;
    height: 27px;
    background: #f6f6f6;
    display: flex;
    align-items: center;
    padding-left: 4px;
    gap: 5px;
    white-space: nowrap;
    flex-shrink: 0;
}

.phone {
    font-size: 12.5px;
}

.beans {
    margin-left: 2px;
    margin-right: 4px;
}

.ico {
    width: 16px;
    height: 16px;
    flex-shrink: 0;
}

.tool {
    display: flex;
    align-items: center;
    gap: 4px;
    margin-right: 7px;
    white-space: nowrap;
}

.tool.off {
    color: #a0a0a0;
}

.sigma {
    width: 16px;
    text-align: center;
    font-family: "Liberation Serif", serif;
    font-size: 14px;
}

.caret {
    display: inline-block;
    width: 0;
    height: 0;
    margin-left: 3px;
    border-left: 3px solid transparent;
    border-right: 3px solid transparent;
    border-top: 3px solid #111;
    flex-shrink: 0;
}

.caret-near {
    margin-left: 0;
}

.caret-solo {
    margin-left: 3px;
    margin-right: 5px;
}

.sep {
    width: 1px;
    height: 18px;
    background: #c8c8c8;
    margin: 0 6px 0 -1px;
    flex-shrink: 0;
}

.more {
    font-size: 12px;
    font-weight: bold;
    line-height: 1;
    align-self: flex-start;
    margin-top: 3px;
    margin-left: auto;
}

.gripper {
    width: 2px;
    height: 16px;
    background: repeating-linear-gradient(#bbb 0 2px, transparent 2px 4px);
    margin-right: 6px;
    flex-shrink: 0;
}

/* 工具栏 */
.toolbar-main {
    height: 31px;
    display: flex;
    flex-shrink: 0;
}

.band {
    display: flex;
    align-items: center;
    background: linear-gradient(#fafafa, #f2f2f2);
    height: 100%;
}

.toolbar-main .band {
    height: 28px;
}

.band-file {
    width: 149px;
    margin-left: 2px;
    padding: 0 4px;
}

.band-file .caret {
    margin-left: 2px;
}

.band-calc {
    width: 546px;
    margin-left: 4px;
    padding: 0 4px 0 2px;
}

.band-view {
    flex: 1;
    margin-left: 3px;
    padding-right: 8px;
}

.tool-white {
    background: #fff;
    height: 28px;
    padding: 0 1px 0 3px;
    margin-right: 4px;
}

.tool-white .caret {
    margin-left: 5px;
}

/* 中部三栏 */
.workspace {
    height: 625px;
    display: flex;
    flex-shrink: 0;
}

.panel {
    display: flex;
    flex-direction: column;
}

.nav-panel {
    width: 161px;
}

.list-panel {
    width: 164px;
    margin-left: 5px;
}

.panel-head {
    height: 15px;
    line-height: 13px;
    border: 1px solid #a0a0a0;
    border-bottom-color: #888;
    background: #ededed;
    display: flex;
    justify-content: space-between;
    align-items: center;
    font-size: 12.5px;
    flex-shrink: 0;
}

.panel-pins {
    display: flex;
    align-items: center;
    gap: 12px;
    padding-right: 5px;
}

.nav-btn {
    height: 21px;
    margin-top: 1px;
    border: 1px solid #a8a8a8;
    background: linear-gradient(#f8f8f8, #ececec);
    text-align: center;
    line-height: 19px;
    flex-shrink: 0;
}

.nav-panel .panel-head + .nav-btn {
    margin-top: 2px;
}

.tree-tools {
    height: 29px;
    display: flex;
    align-items: center;
    gap: 5px;
    padding-left: 6px;
    flex-shrink: 0;
    background: linear-gradient(#f8f8f8, #f0f0f0);
}

.tree {
    height: 490px;
    margin: 0 2px;
    border: 1px solid #a0a0a0;
    background: #fff;
    overflow: hidden;
    flex-shrink: 0;
}

.asc {
    font-family: "Liberation Mono", monospace;
    font-size: 12px;
    letter-spacing: -1.2px;
}

.tree-row {
    height: 16px;
    display: flex;
    align-items: center;
    padding-left: 6px;
    padding-bottom: 2px;
    white-space: nowrap;
}

.tree-row .ico {
    margin-right: 5px;
}

.chev {
    width: 12px;
    height: 12px;
    flex-shrink: 0;
}

.stub {
    width: 4px;
    height: 1px;
    margin-right: 1px;
    background: repeating-linear-gradient(90deg, #777 0 1px, transparent 1px 2px);
}

.guide {
    width: 11px;
    height: 16px;
    flex-shrink: 0;
    background:
        repeating-linear-gradient(90deg, #666 0 1px, transparent 1px 2px) 0 8px / 100% 1px no-repeat,
        repeating-linear-gradient(#666 0 1px, transparent 1px 2px) 0 0 / 1px 100% no-repeat;
}

.guide-end {
    background:
        repeating-linear-gradient(90deg, #666 0 1px, transparent 1px 2px) 0 8px / 100% 1px no-repeat,
        repeating-linear-gradient(#666 0 1px, transparent 1px 2px) 0 0 / 1px 8px no-repeat;
}

.kids {
    background: repeating-linear-gradient(#666 0 1px, transparent 1px 2px) 12px 0 / 1px 100% no-repeat;
}

.tree-row.child {
    padding-left: 31px;
}

.tree-sel {
    display: flex;
    align-items: center;
    background: #d8d8d8;
    height: 16px;
    padding-right: 1px;
}

.book {
    width: 14px;
    height: 14px;
    margin-left: 1px;
    flex-shrink: 0;
}

.book-cad {
    margin-left: 5px;
}

.new {
    font-family: "Liberation Sans", sans-serif;
    font-size: 9px;
    font-weight: bold;
    line-height: 8px;
    background: #ffe400;
    color: #111;
    margin-left: 2px;
    margin-bottom: 7px;
    padding: 0 1px;
    flex-shrink: 0;
}

/* 构件列表 */
.list-tools {
    height: 27px;
    display: flex;
    align-items: center;
    padding-left: 4px;
    margin-top: 2px;
    gap: 3px;
    background: #f8f8f8;
    flex-shrink: 0;
}

.list-x {
    margin: 0 8px 0 6px;
}

.search-row {
    height: 25px;
    display: flex;
    flex-shrink: 0;
}

.search-input {
    width: 138px;
    height: 24px;
    margin-left: 1px;
    border: 1px solid #888;
    background: #fff;
    color: #909090;
    padding-left: 2px;
    line-height: 20px;
}

.search-ico {
    margin: 3px 0 0 4px;
}

.list-box {
    height: 554px;
    display: flex;
    border: 1px solid #a0a0a0;
    background: #fff;
    overflow: hidden;
    flex-shrink: 0;
}

.list-rows {
    width: 145px;
    padding-top: 1px;
    flex-shrink: 0;
}

.list-row {
    height: 16px;
    display: flex;
    align-items: center;
    padding-left: 32px;
}

.list-row .guide {
    width: 8px;
}

.list-item {
    display: flex;
    align-items: center;
    height: 16px;
    width: 68px;
    padding-left: 3px;
    gap: 7px;
}

.list-item .asc {
    padding-top: 2px;
}

.is-selected .list-item {
    background: #316ac5;
    color: #0a1a3a;
}

.gear {
    width: 12px;
    height: 12px;
    flex-shrink: 0;
}

.scrollbar {
    width: 17px;
    background: #f0f0f0;
    display: flex;
    flex-direction: column;
    flex-shrink: 0;
}

.scroll-btn {
    height: 21px;
    display: flex;
    align-items: flex-end;
    justify-content: center;
    padding-bottom: 6px;
    flex-shrink: 0;
}

.scroll-btn-down {
    height: 29px;
    align-items: center;
    padding-bottom: 0;
}

.scroll-thumb {
    height: 419px;
    margin-top: 84px;
    background: #cdcdcd;
    flex-shrink: 0;
}

/* 绘图区那一列 */
.canvas-col {
    width: 1033px;
    margin-left: 3px;
    display: flex;
    flex-direction: column;
}

.row {
    display: flex;
    align-items: stretch;
    flex-shrink: 0;
}

.row-a {
    height: 24px;
}

.row-b {
    height: 25px;
    margin-top: 3px;
}

.row-c {
    height: 26px;
    margin-top: 4px;
    align-items: center;
}

.row-snap {
    height: 27px;
    margin-top: 2px;
}

.band-edit {
    width: 788px;
    margin-left: 2px;
    padding-left: 8px;
}

.band-combo {
    width: 565px;
    margin-left: 2px;
    padding-left: 5px;
}

.band-combo .sep {
    margin: 0 6px 0 1px;
}

.band-axis {
    width: 421px;
    margin-left: 2px;
}

.band-axis .gripper {
    margin-left: 3px;
}

.band-draw {
    width: 489px;
    margin-left: 2px;
}

.band-draw .gripper {
    margin-right: 2px;
}

.band-draw .sep {
    margin: 0 7px 0 1px;
}

.band-snap {
    width: 885px;
    margin-left: 2px;
}

.band-snap > .gripper:first-child {
    margin-right: 7px;
}

.band-snap .tool {
    margin-right: 4px;
}

.band-snap .tool-on {
    gap: 2px;
}

.band-snap .gripper {
    margin-left: 6px;
    margin-right: 5px;
}

.band-snap > .gripper:first-child {
    margin-left: 0;
}

.band-snap .gripper-end {
    margin-left: 4px;
    margin-right: 3px;
}

.band-snap .tool-vertex {
    margin-right: 7px;
}

.band-snap .caret-solo {
    margin-right: 7px;
}

.combo {
    background: #fff;
    height: 22px;
    line-height: 22px;
    padding-left: 3px;
    flex-shrink: 0;
}

.combo-btn {
    width: 11px;
    height: 22px;
    background: #eee;
    margin-right: 3px;
    display: flex;
    align-items: center;
    justify-content: center;
    flex-shrink: 0;
}

.combo-btn .caret {
    margin-left: 0;
}

.combo-floor {
    width: 45px;
}

.combo-type {
    width: 59px;
}

.combo-blank {
    width: 48px;
    margin-left: -4px;
}

.combo-blank + .caret-solo {
    margin-right: 3px;
}

.tool-rect {
    margin-right: 5px;
}

.combo-offset {
    width: 47px;
}

.tool-on {
    background: #e5f1fb;
    border: 1px solid #0078d7;
    padding: 0 3px;
    height: 24px;
    margin-right: 4px;
}

.tool-tight {
    margin-right: 3px;
}

.tool-select {
    padding-left: 4px;
    margin-right: 0;
    gap: 3px;
}

.band-snap .tool-joined {
    margin-right: 0;
}

.tool-joined + .tool:not(.tool-joined) {
    margin-left: 4px;
}

.gripper-c {
    margin-left: 5px;
    margin-right: 0;
}

.blank-band {
    width: 25px;
    height: 26px;
    background: #f6f6f6;
}

.unit {
    color: #666;
    font-family: "Liberation Sans", sans-serif;
    font-size: 13px;
    flex-shrink: 0;
}

.unit-y {
    margin-left: 5px;
}

.unit-deg {
    margin-left: 4px;
}

.spin {
    height: 23px;
    border: 1px solid #777;
    background: #f8f8f8;
    color: #b09070;
    font-family: "Liberation Sans", sans-serif;
    font-size: 13px;
    display: flex;
    align-items: center;
    justify-content: flex-end;
    flex-shrink: 0;
}

.spin-xy {
    width: 58px;
    margin-left: 3px;
    margin-right: 1px;
}

.spin-rot {
    width: 68px;
}

.spin-arrows {
    width: 18px;
    height: 16px;
    background:
        linear-gradient(45deg, transparent 50%, #555 50%) 6px 1px / 3px 3px no-repeat,
        linear-gradient(-45deg, transparent 50%, #555 50%) 9px 1px / 3px 3px no-repeat,
        linear-gradient(135deg, transparent 50%, #555 50%) 6px 12px / 3px 3px no-repeat,
        linear-gradient(-135deg, transparent 50%, #555 50%) 9px 12px / 3px 3px no-repeat;
}

.sep-wide {
    margin: 0 2px 0 0;
}

.sep-rot {
    margin: 0 3px 0 4px;
}

.checkbox {
    width: 11px;
    height: 11px;
    border: 1px solid #888;
    background: #fff;
    flex-shrink: 0;
}

.rot-label {
    margin: 0 4px 0 9px;
    flex-shrink: 0;
}

/* 3D 视图 */
.viewport {
    display: block;
    width: 1033px;
    height: 510px;
    margin-top: 2px;
    background: #000;
    flex-shrink: 0;
}

.viewport polygon {
    shape-rendering: crispEdges;
}

.g-light { fill: #00e600; }
.g-mid { fill: #00a800; }
.g-dark { fill: #009c00; }
.g-front { fill: #00b000; }
.black { fill: #000; }
.white-top { fill: #e6e6e6; }
.white-front { fill: #b0b0b0; }
.b-top { fill: #0073e6; }
.b-front { fill: #005ab0; }
.b-side { fill: #0050a0; }

.red-lines line {
    stroke: #f00;
    stroke-width: 1;
}

.axes text {
    font-family: "Liberation Sans", sans-serif;
    font-size: 11px;
}

.axis-z { fill: #0a78f0; }
.axis-y { fill: #10a010; }
.axis-x { fill: #c00000; }

/* 状态栏 */
.statusbar {
    height: 22px;
    margin-top: 1px;
    display: flex;
    align-items: center;
    gap: 3px;
    padding-left: 1px;
    flex-shrink: 0;
}

.cell {
    height: 20px;
    line-height: 18px;
    border: 1px solid #dcdcdc;
    background: linear-gradient(#fff, #f2f2f2);
    padding-left: 1px;
    white-space: nowrap;
    flex-shrink: 0;
}

.cell-pos { width: 147px; }
.cell-h { width: 77px; }
.cell-base { width: 97px; }
.cell-n { width: 47px; }
.cell-msg { width: 913px; }
.cell-fps { width: 70px; }

/* 任务栏 */
.taskbar {
    height: 39px;
    display: flex;
    background: #0a181e;
    color: #fff;
    flex-shrink: 0;
}

.task-start {
    width: 48px;
    background: #050505;
    display: flex;
    align-items: center;
    justify-content: center;
    flex-shrink: 0;
}

.task-search {
    width: 344px;
    background: #f2f2f2;
    color: #333;
    font-size: 13px;
    display: flex;
    align-items: center;
    padding-left: 10px;
    gap: 10px;
    flex-shrink: 0;
}

.task-mic {
    margin-left: auto;
    margin-right: 14px;
}

.task-cell {
    display: flex;
    align-items: center;
    justify-content: center;
    flex-shrink: 0;
}

.task-view { width: 48px; }
.task-fan { width: 50px; }
.task-spiral { width: 57px; }

.task-ie {
    width: 150px;
    height: 32px;
    margin: 3px 0 0 2px;
    background: #3c4144;
    border: 1px solid #5a5e60;
    border-radius: 2px;
    display: flex;
    align-items: center;
    padding: 0 6px 0 3px;
    flex-shrink: 0;
}

.ie-e {
    color: #2a90e8;
    font-family: "Liberation Sans", sans-serif;
    font-size: 28px;
    font-weight: bold;
    line-height: 28px;
    width: 24px;
    flex-shrink: 0;
}

.ie-text {
    color: #a0a0a0;
    font-size: 12px;
    flex: 1;
}

.task-app {
    width: 40px;
    margin-right: 10px;
    display: flex;
    align-items: center;
    justify-content: center;
    border-bottom: 2px solid #6db2e8;
    flex-shrink: 0;
}

.task-scroll {
    width: 16px;
    margin-left: auto;
    background: #e8e8e8;
    display: flex;
    flex-direction: column;
    align-items: center;
    justify-content: space-around;
    padding: 3px 0;
    flex-shrink: 0;
}

.tray {
    display: flex;
    align-items: center;
    justify-content: center;
    flex-shrink: 0;
}

.tray-two {
    flex-direction: column;
    font-size: 12px;
    line-height: 18px;
    color: #ddd;
}

.tray-people { width: 60px; }
.tray-cpu { width: 67px; }
.tray-up { width: 28px; }
.tray-bat { width: 25px; }
.tray-wifi { width: 24px; }
.tray-vol { width: 22px; }
.tray-kb { width: 32px; }

.tray-a {
    width: 24px;
    font-family: "Liberation Sans", sans-serif;
    font-size: 17px;
}

.tray-s {
    width: 33px;
}

.tray-s span {
    width: 14px;
    height: 14px;
    background: #e84c1a;
    border-radius: 3px;
    color: #fff;
    font-weight: bold;
    font-size: 12px;
    line-height: 14px;
    text-align: center;
}

.tray-clock { width: 76px; }

.tray-note {
    width: 52px;
}

.note-count {
    width: 16px;
    height: 16px;
    margin: 10px 0 0 -5px;
    border-radius: 50%;
    background: #444;
    border: 1px solid #888;
    color: #fff;
    font-size: 11px;
    font-weight: bold;
    line-height: 14px;
    text-align: center;
}
```
